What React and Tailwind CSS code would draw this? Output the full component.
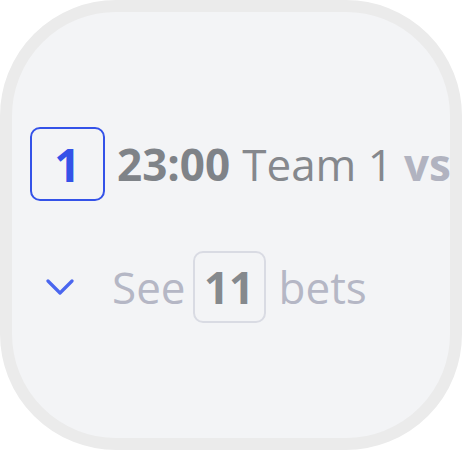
export default function App() {
  return (
    <div className="w-[462px] h-[450px] bg-white" style={{ fontFamily: '"Open Sans", "Noto Sans", sans-serif' }}>
      <div className="w-full h-full rounded-[116px] border-[12px] border-[#ebebeb] bg-[#f3f4f6] overflow-hidden flex flex-col justify-center gap-[50px] pl-[18px]">
        {/* match row */}
        <div className="flex items-center whitespace-nowrap">
          <div className="w-[75px] h-[74px] shrink-0 rounded-[10px] border-2 border-[#3452e8] flex items-center justify-center text-[46px] font-bold text-[#3452e8] leading-none">
            1
          </div>
          <span className="ml-[12px] text-[44px] leading-none font-bold text-[#7f8388]">23:00</span>
          <span className="ml-[12px] text-[44px] leading-none text-[#85888d]">Team 1</span>
          <span className="ml-[11px] text-[44px] leading-none font-bold text-[#b1b3c0]">vs</span>
        </div>

        {/* bets row */}
        <div className="flex items-center whitespace-nowrap">
          <svg className="ml-[16px] w-[28px] h-[16px] shrink-0" viewBox="0 0 28 16" fill="none">
            <path d="M2 2 L14 14 L26 2" stroke="#4a66ef" strokeWidth="3.2" strokeLinecap="round" strokeLinejoin="round" />
          </svg>
          <span className="ml-[38px] text-[44px] leading-none text-[#b5b7c5]">See</span>
          <div className="ml-[7px] w-[73px] h-[72px] shrink-0 rounded-[10px] border-2 border-[#d9dbe3] flex items-center justify-center text-[44px] font-bold text-[#85898d] leading-none">
            11
          </div>
          <span className="ml-[13px] text-[44px] leading-none text-[#b5b7c5]">bets</span>
        </div>
      </div>
    </div>
  );
}
